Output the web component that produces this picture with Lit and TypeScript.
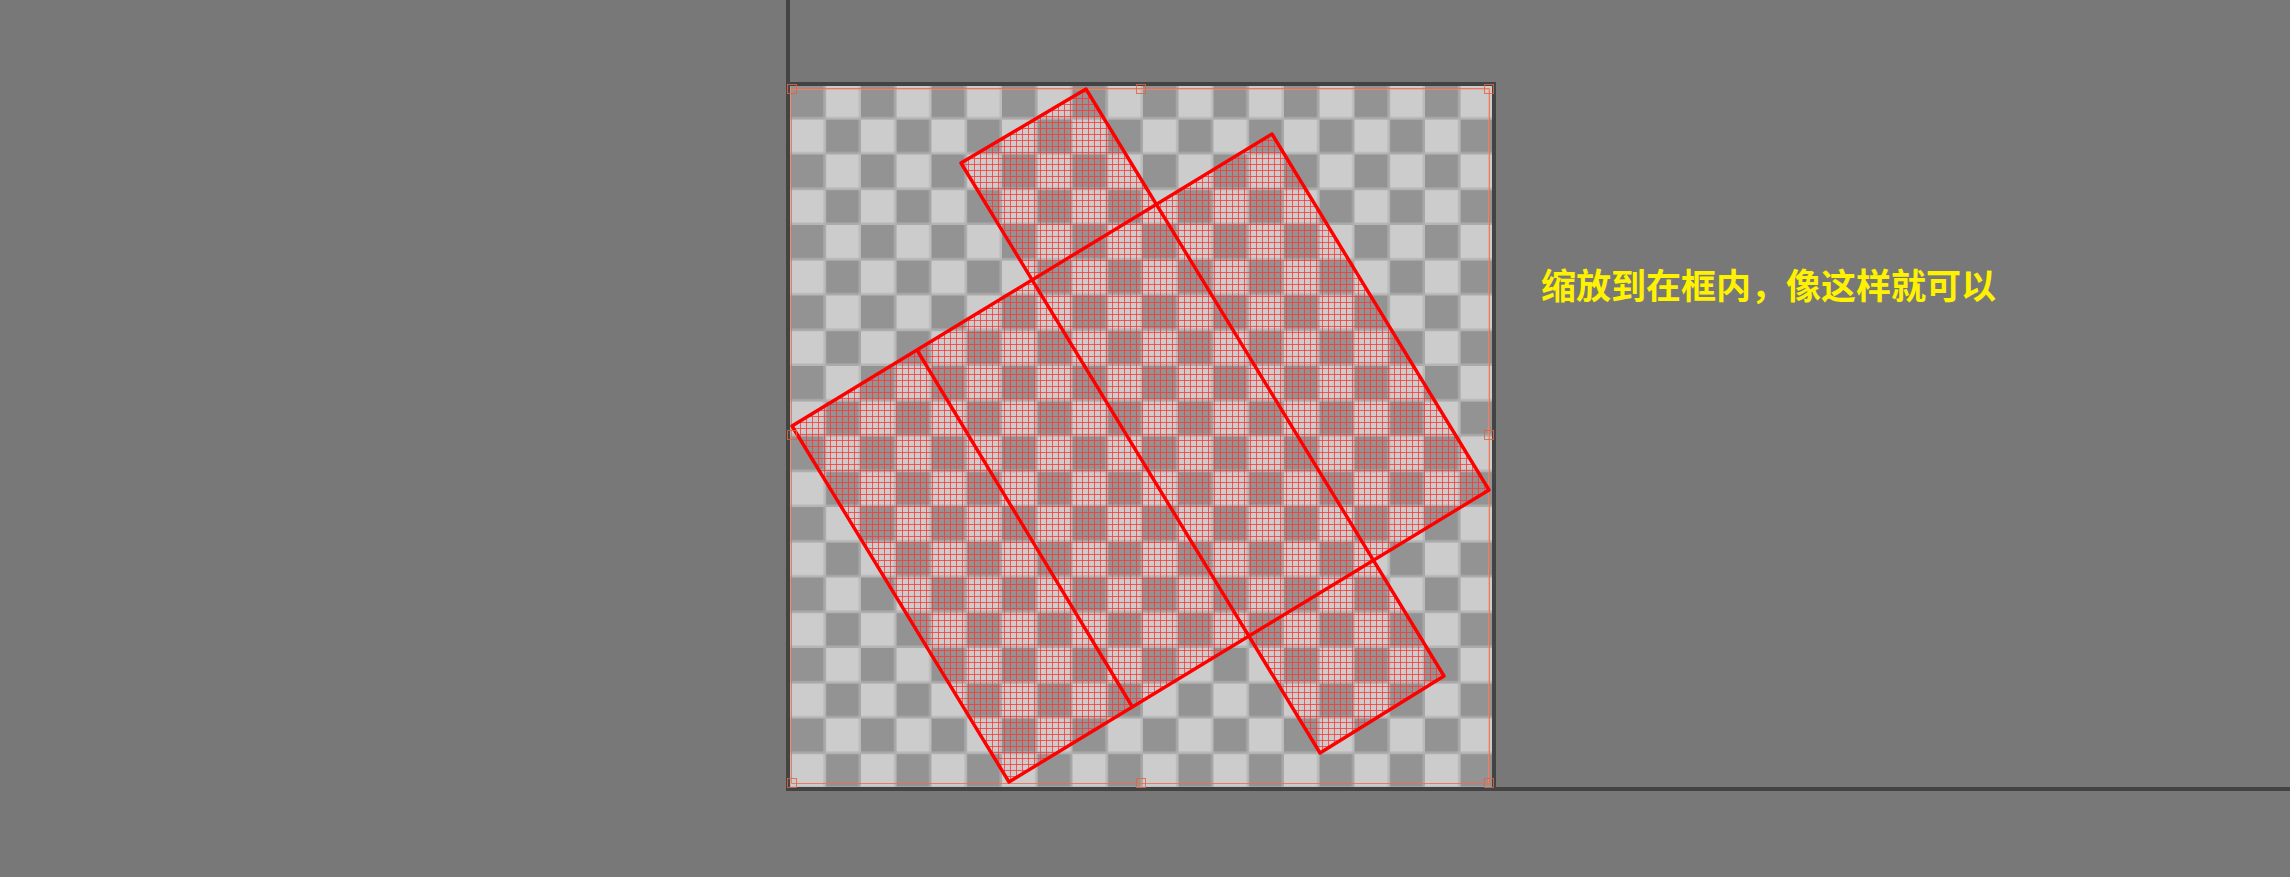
import { LitElement, html, svg, css } from "lit";
import { customElement } from "lit/decorators.js";

type Point = [number, number];

const shapes: Point[][] = [
  [[1086, 89], [1444, 676], [1320, 753], [961, 163]],
  [[1272, 134], [1489, 490], [1009, 782], [792, 426]],
];
const divider: Point[] = [[917, 350], [1133, 708]];
const handles: Point[] = [
  [791, 88], [1140, 88], [1488, 88],
  [791, 434], [1488, 434],
  [791, 782], [1140, 782], [1488, 782],
];
const toPoints = (list: Point[]) => list.map((p) => p.join(",")).join(" ");

@customElement("app-root")
export class AppRoot extends LitElement {
  static styles = css`
    :host {
      display: block;
    }
    .stage {
      display: grid;
      position: relative;
      min-height: 100vh;
      overflow: hidden;
      background: #787878;
    }
    .canvas {
      display: block;
      width: 100%;
      height: 100%;
    }
    .note {
      position: absolute;
      left: 1541px;
      top: 260px;
      margin: 0;
      color: #fff200;
      font: 700 35px/48px "Noto Sans CJK SC", sans-serif;
      white-space: nowrap;
    }
  `;

  render() {
    return html`
      <main class="stage">
        <svg class="canvas" aria-hidden="true">
          <defs>
            <pattern id="checker" x="790.5" y="84" width="70.5" height="70.5" patternUnits="userSpaceOnUse">
              <rect width="71" height="71" fill="#939393" />
              <path d="M35.25 0H70.5V35.25H35.25ZM0 35.25H35.25V70.5H0Z" fill="#cccccc" />
              <path d="M34 0V70.5M69.25 0V70.5" stroke="#b2b2b2" stroke-opacity=".65" stroke-width="2.5" />
              <path d="M0 34.25H70.5M0 69.25H70.5" stroke="#b0b0b0" stroke-opacity=".8" stroke-width="2.5" />
            </pattern>
            <pattern id="mesh" width="6" height="6" patternUnits="userSpaceOnUse">
              <path d="M0 2.5H6M2.5 0V6" stroke="#ff3636" stroke-opacity=".8" stroke-width="1" />
            </pattern>
          </defs>
          <rect x="790" y="85" width="702" height="702" fill="url(#checker)" />
          <path d="M788 0V787M786 84H1496M1494 84V789" fill="none" stroke="#434343" stroke-width="4" />
          <line x1="786" y1="789" x2="100%" y2="789" stroke="#434343" stroke-width="4" />
          <path d="M791.5 88.5H1489.5V783.5H791.5Z" fill="none" stroke="#ed6f4e" stroke-opacity=".85" />
          <path d="M792 89.5H1489M1488.5 90V783" fill="none" stroke="#ed8f78" stroke-opacity=".5" />
          <path d="M1273 134L1488 490L1009 781L792 426L1032 280L961 163L1085 90L1156 205ZM1373 560L1444 676L1320 752L1249 636Z" fill="url(#mesh)" />
          <g fill="none" stroke="#ff0000" stroke-width="3.4" stroke-linejoin="round">
            ${shapes.map((s) => svg`<polygon points=${toPoints(s)} />`)}
            <polyline points=${toPoints(divider)} />
          </g>
          <g fill="none" stroke="#e3633f" stroke-opacity=".85">
            ${handles.map(([x, y]) => svg`<rect x=${x - 3.5} y=${y - 3.5} width="9" height="9" />`)}
          </g>
        </svg>
        <p class="note">缩放到在框内，像这样就可以</p>
      </main>
    `;
  }
}
